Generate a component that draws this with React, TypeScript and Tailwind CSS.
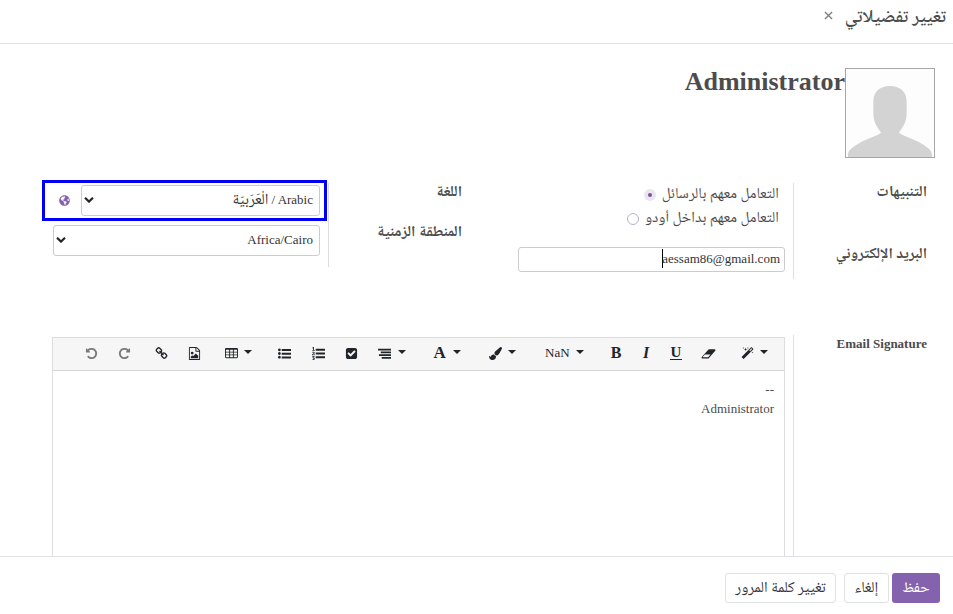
import React from 'react';
import { FaGlobeAmericas } from 'react-icons/fa';

const paths = {
  undo: 'M1664 896q0 156-61 298t-164 245-245 164-298 61q-172 0-327-72.5t-264-204.5q-7-10-6.5-22.5t8.5-20.5l137-138q10-9 25-9 16 2 23 12 73 95 179 147t225 52q104 0 198.5-40.5t163.5-109.5 109.5-163.5 40.5-198.5-40.5-198.5-109.5-163.5-163.5-109.5-198.5-40.5q-98 0-188 35.5t-160 101.5l137 138q31 30 14 69-17 40-59 40h-448q-26 0-45-19t-19-45v-448q0-42 40-59 39-17 69 14l130 129q107-101 244.5-156.5t284.5-55.5q156 0 298 61t245 164 164 245 61 298z',
  redo: 'M1664 256v448q0 26-19 45t-45 19h-448q-42 0-59-40-17-39 14-69l138-138q-148-137-349-137-104 0-198.5 40.5t-163.5 109.5-109.5 163.5-40.5 198.5 40.5 198.5 109.5 163.5 163.5 109.5 198.5 40.5q119 0 225-52t179-147q7-10 23-12 15 0 25 9l137 138q9 8 9.5 20.5t-7.5 22.5q-109 132-264 204.5t-327 72.5q-156 0-298-61t-245-164-164-245-61-298 61-298 164-245 245-164 298-61q147 0 284.5 55.5t244.5 156.5l130-129q29-31 70-14 39 17 39 59z',
  link: 'M1520 1216q0-40-28-68l-208-208q-28-28-68-28-42 0-72 32 3 3 19 18.5t21.5 21.5 15 19 13 25.5 3.5 27.5q0 40-28 68t-68 28q-15 0-27.5-3.5t-25.5-13-19-15-21.5-21.5-18.5-19q-33 31-33 73 0 40 28 68l206 207q27 27 68 27 40 0 68-26l147-146q28-28 28-67zm-703-705q0-40-28-68l-206-207q-28-28-68-28-39 0-68 27l-147 146q-28 28-28 67 0 40 28 68l208 208q27 27 68 27 42 0 72-31-3-3-19-18.5t-21.5-21.5-15-19-13-25.5-3.5-27.5q0-40 28-68t68-28q15 0 27.5 3.5t25.5 13 19 15 21.5 21.5 18.5 19q33-31 33-73zm895 705q0 120-85 203l-147 146q-83 83-203 83-121 0-204-85l-206-207q-83-83-83-203 0-123 88-209l-88-88q-86 88-208 88-120 0-204-84l-208-208q-84-84-84-204t85-203l147-146q83-83 203-83 121 0 204 85l206 207q83 83 83 203 0 123-88 209l88 88q86-88 208-88 120 0 204 84l208 208q84 84 84 204z',
  image: 'M1596 380q28 28 48 76t20 88v1152q0 40-28 68t-68 28h-1344q-40 0-68-28t-28-68v-1600q0-40 28-68t68-28h896q40 0 88 20t76 48zm-444-244v376h376q-10-29-22-41l-313-313q-12-12-41-22zm384 1528v-1024h-416q-40 0-68-28t-28-68v-416h-768v1536h1280zm-128-448v320h-1024v-192l192-192 128 128 384-384zm-832-192q-80 0-136-56t-56-136 56-136 136-56 136 56 56 136-56 136-136 56z',
  table: 'M160 128h1472a160 160 0 0 1 160 160v1088a160 160 0 0 1-160 160h-1472a160 160 0 0 1-160-160v-1088a160 160 0 0 1 160-160zM128 384v256h448v-256zM704 384v256h384v-256zM1216 384v256h448v-256zM128 768v256h448v-256zM704 768v256h384v-256zM1216 768v256h448v-256zM128 1152v256h448v-256zM704 1152v256h384v-256zM1216 1152v256h448v-256z',
  ul: 'M192 192a192 192 0 1 0 .1 0zM192 704a192 192 0 1 0 .1 0zM192 1216a192 192 0 1 0 .1 0zM512 288h1280v256h-1280zM512 800h1280v256h-1280zM512 1312h1280v256h-1280z',
  ol: 'M381 1620q0 80-54.5 126t-135.5 46q-106 0-172-66l57-88q49 45 106 45 29 0 50.5-14.5t21.5-42.5q0-64-105-56l-26-56q8-10 32.5-43.5t42.5-54 37-38.5v-1q-16 0-48.5 1t-48.5 1v53h-106v-152h333v88l-95 115q51 12 81 49t30 88zm2-627v159h-362q-6-36-6-54 0-51 23.5-93t56.5-68 66-47.5 56.5-43.5 23.5-45q0-25-14.5-38.5t-39.5-13.5q-46 0-81 58l-85-59q24-51 71.5-79.5t105.5-28.5q73 0 123 41.5t50 112.5q0 50-34 91.5t-75 64.5-75.5 50.5-35.5 52.5h127v-60h105zm1409 319v192q0 13-9.5 22.5t-22.5 9.5h-1216q-13 0-22.5-9.5t-9.5-22.5v-192q0-14 9-23t23-9h1216q13 0 22.5 9.5t9.5 22.5zm-1408-899v99h-335v-99h107q0-41 .5-121.5t.5-121.5v-12h-2q-8 17-50 54l-71-76 136-127h106v404h108zm1408 387v192q0 13-9.5 22.5t-22.5 9.5h-1216q-13 0-22.5-9.5t-9.5-22.5v-192q0-14 9-23t23-9h1216q13 0 22.5 9.5t9.5 22.5zm0-512v192q0 13-9.5 22.5t-22.5 9.5h-1216q-13 0-22.5-9.5t-9.5-22.5v-192q0-13 9.5-22.5t22.5-9.5h1216q13 0 22.5 9.5t9.5 22.5z',
  check: 'M813 1299l614-614q19-19 19-45t-19-45l-102-102q-19-19-45-19t-45 19l-467 467-211-211q-19-19-45-19t-45 19l-102 102q-19 19-19 45t19 45l358 358q19 19 45 19t45-19zm851-883v960q0 119-84.5 203.5t-203.5 84.5h-960q-119 0-203.5-84.5t-84.5-203.5v-960q0-119 84.5-203.5t203.5-84.5h960q119 0 203.5 84.5t84.5 203.5z',
  align: 'M0 240h1792v230h-1792zM384 624h1408v230h-1408zM128 1008h1664v230h-1664zM512 1392h1280v230h-1280z',
  brush: 'M1615 0q70 0 122.5 46.5t52.5 116.5q0 63-45 151-332 629-465 752-97 91-218 91-126 0-216.5-92.5t-90.5-219.5q0-128 92-212l638-579q59-54 130-54zm-909 1034q39 76 106.5 130t150.5 76l1 71q4 213-129.5 347t-348.5 134q-123 0-218-46.5t-152.5-127.5-86.5-183-29-220q7 5 41 30t62 44.5 59 36.5 46 17q41 0 55-37 25-66 57.5-112.5t69.5-76 88-47.5 103-25.5 125-10.5z',
  eraser: 'M832 1408l336-384h-768l-336 384h768zm1013-1013q15 34 9.5 71.5t-30.5 65.5l-896 1024q-38 44-96 44h-768q-38 0-69.5-20.5t-47.5-54.5q-15-34-9.5-71.5t30.5-65.5l896-1024q38-44 96-44h768q38 0 69.5 20.5t47.5 54.5z',
  magic: 'M1254 581l293-293-107-107-293 293zm447-293q0 27-18 45l-1286 1286q-18 18-45 18t-45-18l-198-198q-18-18-18-45t18-45l1286-1286q18-18 45-18t45 18l198 198q18 18 18 45zm-1351-190l98 30-98 30-30 98-30-98-98-30 98-30 30-98zm350 162l196 60-196 60-60 196-60-196-196-60 196-60 60-196zm930 478l98 30-98 30-30 98-30-98-98-30 98-30 30-98zm-640-640l98 30-98 30-30 98-30-98-98-30 98-30 30-98z',
};

function Icon({ name, className = '' }: { name: keyof typeof paths; className?: string }) {
  return (
    <svg viewBox="0 0 1792 1792" className={`size-[13px] shrink-0 overflow-visible ${className}`} fill="currentColor" fillRule={name === 'table' ? 'evenodd' : 'nonzero'}>
      <path d={paths[name]} />
    </svg>
  );
}

function Caret({ className = '' }: { className?: string }) {
  return <span className={`mb-[3px] h-0 w-0 border-x-4 border-t-4 border-x-transparent border-t-[#212529] ${className}`} />;
}

function Chevron() {
  return (
    <svg viewBox="0 0 10 6" className="mb-px h-[6px] w-[10px]" fill="none" stroke="#212529" strokeWidth="2.2">
      <path d="M1 .8 5 4.6 9 .8" />
    </svg>
  );
}

const naskh = 'font-["Noto_Naskh_Arabic_UI","Noto_Naskh_Arabic","DejaVu_Sans",serif]';

function Label({ children, className = '' }: { children: React.ReactNode; className?: string }) {
  return <div className={`flex h-[18px] items-center text-[15.3px] font-bold whitespace-nowrap ${naskh} ${className}`}>{children}</div>;
}

export default function App() {
  return (
    <div dir="rtl" className='flex h-[614px] w-[953px] flex-col overflow-hidden bg-white font-["Liberation_Serif","Noto_Naskh_Arabic",serif] text-[13px] leading-5 text-[#4c4c4c]'>
      <header className="flex h-11 shrink-0 items-center gap-[12px] border-b border-[#dee2e6] pr-[7px] pb-2">
        <h4 className={`text-[18.4px] font-semibold whitespace-nowrap ${naskh}`}>تغيير تفضيلاتي</h4>
        <svg viewBox="0 0 10 10" className="mb-[4px] size-[9px]" stroke="#7c7f83" strokeWidth="1.5">
          <path d="M1 1 9 9M9 1 1 9" />
        </svg>
      </header>

      <main className="flex min-h-0 flex-1 flex-col overflow-hidden">
        <section className="mt-6 flex h-[90px] shrink-0 pr-[18px]">
          <svg viewBox="0 0 90 90" className="size-[90px] shrink-0 border border-[#a6a6a6] bg-[#fdfdfd]" fill="#d3d3d3">
            <path d="M45 17.500c11 0 17 6.500 17 15.500v13c0 8-4 14-8 19 5 4 14 6 21 10 8 5 13 8 13 13v2H2v-2c0-5 5-8 13-13 7-4 16-6 21-10-4-5-8-11-8-19V33c0-9 6-15.500 17-15.500z" />
          </svg>
          <h1 className="text-[26px] leading-[27px] font-bold">Administrator</h1>
        </section>

        <section className="mt-[25px] flex h-[97px] shrink-0 pr-[26px]">
          <div className="w-[133px] shrink-0">
            <Label>التنبيهات</Label>
            <Label className="mt-[44px]">البريد الإلكتروني</Label>
          </div>
          <div className="flex h-[96px] w-[276px] shrink-0 flex-col border-r border-[#ddd] pr-2">
            <div className="flex h-[23px] items-center gap-[6px] pr-[6px]">
              <span className={`pb-[2px] text-[15.3px] ${naskh}`}>التعامل معهم بالرسائل</span>
              <span className="flex size-3 items-center justify-center rounded-full bg-[#e9e6ee]">
                <span className="size-1 rounded-full bg-[#7c4fa8]" />
              </span>
            </div>
            <div className="mt-px flex h-[23px] items-center gap-[6px] pr-[6px]">
              <span className={`pb-px text-[15.3px] ${naskh}`}>التعامل معهم بداخل أودو</span>
              <span className="size-3 rounded-full border border-[#b6b3cb]" />
            </div>
            <div className="mt-[17px] flex h-[25px] items-center justify-start rounded-[3px] border border-[#ccc] pr-1 pb-[2px] text-[#333]">
              <span dir="ltr" className="flex items-center">
                <span className="-mr-px h-[19px] w-px bg-black" />
                aessam86@gmail.com
              </span>
            </div>
          </div>
          <div className="mr-14 w-[133px] shrink-0">
            <Label>اللغة</Label>
            <Label className="mt-[22px]">المنطقة الزمنية</Label>
          </div>
          <div className="relative flex h-[84px] w-[276px] shrink-0 flex-col border-r border-[#ddd] pt-[2px] pr-2">
            <div className="flex h-[31px] items-center">
              <div className="flex h-full w-[239px] items-center justify-between rounded-[3px] border border-[#ccc] pr-[6px] pb-px pl-[2px] text-[#333]">
                <span className="flex items-center gap-[3px] whitespace-nowrap">
                  <span dir="ltr">/ Arabic</span>
                  <span className={`pt-[2px] text-[15.3px] leading-none ${naskh}`}>الْعَرَبيّة</span>
                </span>
                <Chevron />
              </div>
              <FaGlobeAmericas className="mr-[11px] mb-px size-[11px] text-[#8562ad]" />
            </div>
            <div className="mt-[9px] flex h-[31px] shrink-0 items-center justify-between rounded-[3px] border border-[#ccc] pr-[6px] pb-px pl-[2px] text-[#333]">
              <span>Africa/Cairo</span>
              <Chevron />
            </div>
            <div className="absolute -top-[3px] right-[1px] h-[41px] w-[285px] border-[3px] border-[#0000f5]" />
          </div>
        </section>

        <section className="mt-[55px] flex min-h-0 flex-1 pr-[26px]">
          <div className="w-[133px] shrink-0">
            <div className="flex h-[18px] items-center font-bold whitespace-nowrap">Email Signature</div>
          </div>
          <div className="flex w-[742px] shrink-0 border-r border-[#ddd] pt-[2px] pr-2">
            <div className="flex w-[733px] flex-col border border-b-0 border-[#ddd]">
              <div dir="ltr" className="flex h-[33px] shrink-0 items-center border-b border-[#d5d5d5] bg-[#f6f6f6] pb-[2px] pl-[31.5px] text-[#212529]">
                <Icon name="undo" className="text-[#77797c]" />
                <Icon name="redo" className="ml-5 text-[#77797c]" />
                <Icon name="link" className="ml-6" />
                <Icon name="image" className="ml-5" />
                <Icon name="table" className="ml-[24.500px]" />
                <Caret className="ml-[6px]" />
                <Icon name="ul" className="ml-[26px]" />
                <Icon name="ol" className="ml-[21px]" />
                <Icon name="check" className="ml-[20px]" />
                <Icon name="align" className="ml-5" />
                <Caret className="ml-[6.5px]" />
                <b className="ml-7 w-3 text-center text-[17px]">A</b>
                <Caret className="ml-[7px]" />
                <Icon name="brush" className="ml-7" />
                <Caret className="ml-[6px]" />
                <span className="ml-[29.500px] w-[25px]">NaN</span>
                <Caret className="ml-[6px]" />
                <b className="ml-[26px] w-3 text-center text-base">B</b>
                <b className="ml-5 w-2 text-center text-base italic">I</b>
                <span className="ml-5 flex h-[13px] w-3 justify-center border-b border-[#212529] text-[15px] leading-[11px] font-bold">U</span>
                <Icon name="eraser" className="ml-5" />
                <Icon name="magic" className="ml-[26px]" />
                <Caret className="ml-[6px]" />
              </div>
              <div className="flex flex-col pt-[9px] pr-[10px] leading-[19px]">
                <span>--</span>
                <span>Administrator</span>
              </div>
            </div>
          </div>
        </section>
      </main>

      <footer className={`flex h-[58px] shrink-0 border-t border-[#dee2e6] pt-4 pr-[13px] text-[15.3px] text-[#333] ${naskh}`}>
        <button className="h-[30px] w-12 rounded-[3px] bg-[#8562ad] text-white">حفظ</button>
        <button className="mr-[3px] h-[30px] w-[45px] rounded-[3px] border border-[#dee2e6]">إلغاء</button>
        <button className="mr-2 h-[30px] w-[111px] rounded-[3px] border border-[#dee2e6] whitespace-nowrap">تغيير كلمة المرور</button>
      </footer>
    </div>
  );
}
